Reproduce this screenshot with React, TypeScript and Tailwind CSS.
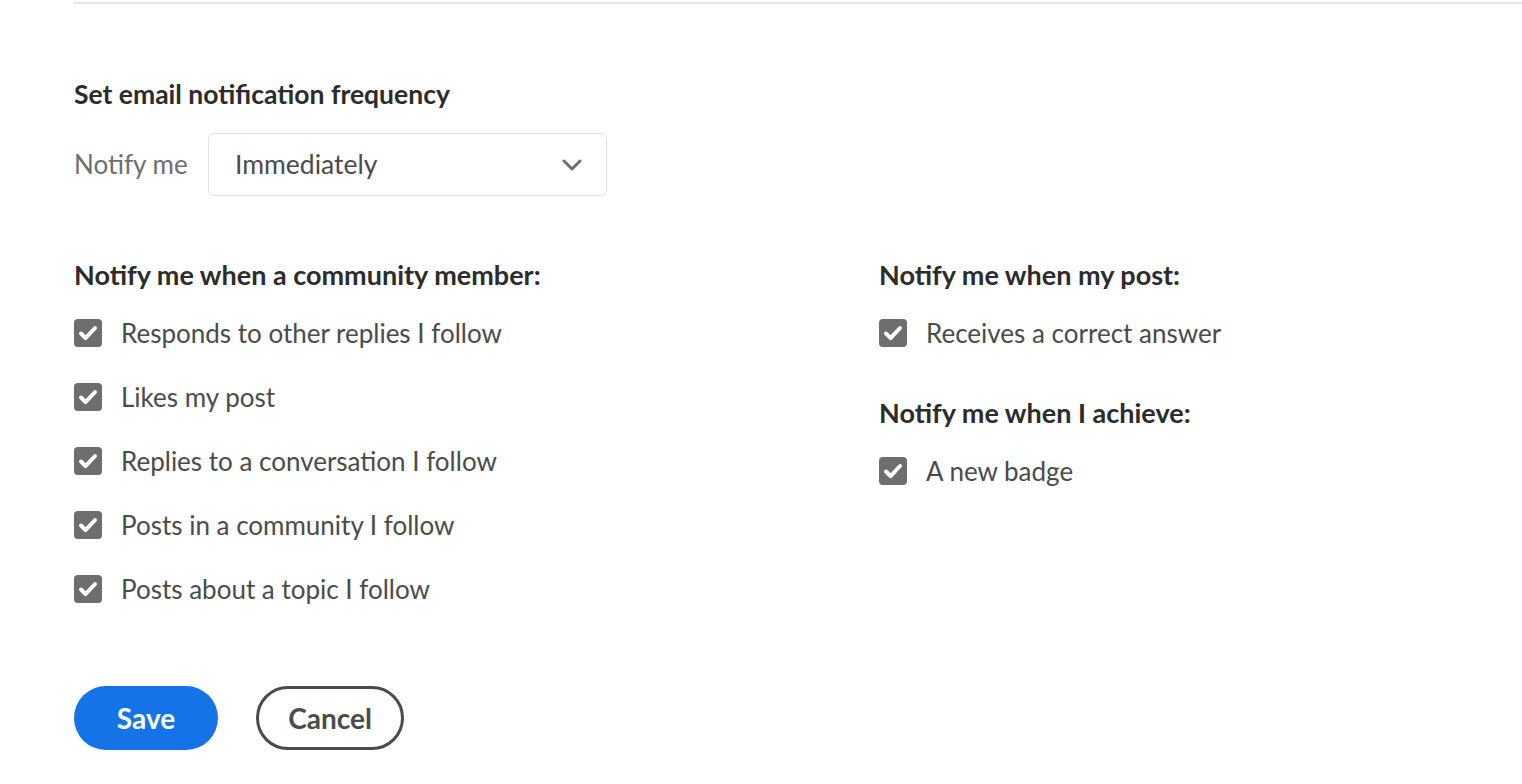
import React, { useState } from "react";

const MEMBER_ITEMS = [
  "Responds to other replies I follow",
  "Likes my post",
  "Replies to a conversation I follow",
  "Posts in a community I follow",
  "Posts about a topic I follow",
];

function CheckRow({ label }: { label: string }) {
  const [checked, setChecked] = useState(true);
  return (
    <label className="flex items-center h-[64px] cursor-pointer select-none">
      <span
        onClick={() => setChecked(!checked)}
        className={`w-[28px] h-[28px] rounded-[4px] flex items-center justify-center flex-shrink-0 ${
          checked ? "bg-[#6e6e6e]" : "border-2 border-[#6e6e6e] bg-white"
        }`}
      >
        {checked && (
          <svg width="28" height="28" viewBox="0 0 28 28" fill="none">
            <path d="M7 14.5l4.6 4.6L21 9" stroke="white" strokeWidth="4" strokeLinecap="round" strokeLinejoin="round" />
          </svg>
        )}
      </span>
      <span className="ml-[19px] text-[26px] leading-[34px] text-[#4b4b4b]">{label}</span>
    </label>
  );
}

export default function App() {
  return (
    <div className="min-h-screen bg-white font-['Lato',sans-serif]">
      <div className="ml-[74px] h-[2px] mt-[2px] bg-[#e6e6e6]" />

      <div className="pl-[74px] pt-[73px]">
        {/* Frequency */}
        <h2 className="text-[26.5px] font-bold text-[#2c2c2c] leading-[34px]">Set email notification frequency</h2>
        <div className="flex items-center mt-[22px]">
          <span className="text-[26px] text-[#6e6e6e] w-[134px]">Notify me</span>
          <div className="w-[399px] h-[63px] border border-[#e1e1e1] rounded-[6px] flex items-center justify-between pl-[26px] pr-[24px]">
            <span className="text-[26.5px] text-[#4b4b4b]">Immediately</span>
            <svg width="20" height="12" viewBox="0 0 20 12" fill="none">
              <path d="M2 2l8 8 8-8" stroke="#6e6e6e" strokeWidth="3" strokeLinecap="round" strokeLinejoin="round" />
            </svg>
          </div>
        </div>

        {/* Checklists */}
        <div className="grid grid-cols-[805px_1fr] mt-[62px]">
          <div>
            <h3 className="text-[27px] font-bold text-[#2c2c2c] leading-[34px]">Notify me when a community member:</h3>
            <div className="mt-[9px]">
              {MEMBER_ITEMS.map((item) => (
                <CheckRow key={item} label={item} />
              ))}
            </div>
          </div>
          <div>
            <h3 className="text-[27px] font-bold text-[#2c2c2c] leading-[34px]">Notify me when my post:</h3>
            <div className="mt-[9px]">
              <CheckRow label="Receives a correct answer" />
            </div>
            <h3 className="text-[27px] font-bold text-[#2c2c2c] leading-[34px] mt-[31px]">Notify me when I achieve:</h3>
            <div className="mt-[9px]">
              <CheckRow label="A new badge" />
            </div>
          </div>
        </div>

        {/* Actions */}
        <div className="flex items-center gap-[38px] mt-[65px]">
          <button className="w-[144px] h-[64px] rounded-full bg-[#1473e6] text-white text-[28px] font-bold">Save</button>
          <button className="w-[148px] h-[64px] rounded-full border-[3px] border-[#4b4b4b] text-[#4b4b4b] text-[28px] font-bold">Cancel</button>
        </div>
      </div>
    </div>
  );
}
